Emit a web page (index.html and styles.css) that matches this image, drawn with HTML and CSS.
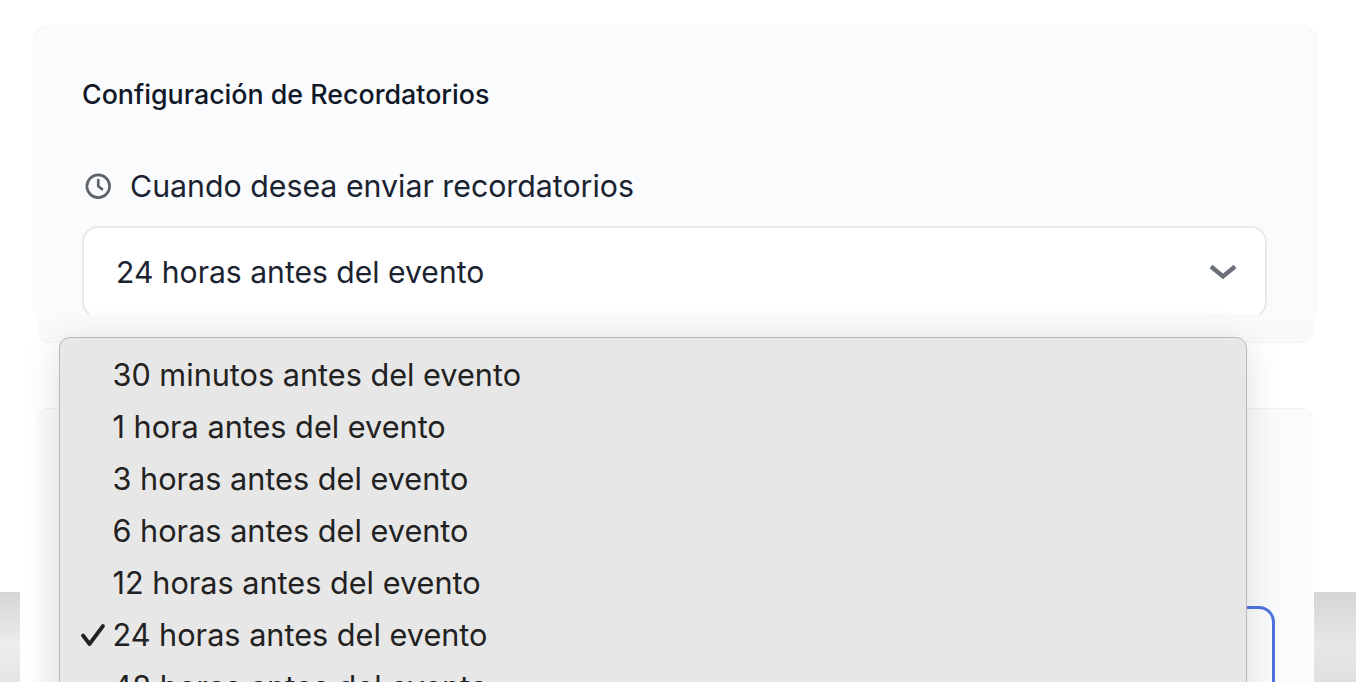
FILE: index.html
```html
<!DOCTYPE html>
<html lang="es">
<head>
<meta charset="utf-8">
<title>Configuración de Recordatorios</title>
<link rel="stylesheet" href="styles.css">
</head>
<body>
<main class="page">
  <section class="card card-top">
    <h2 class="title">Configuración de Recordatorios</h2>
    <div class="label-row">
      <svg class="clock" viewBox="0 0 28 28" fill="none" stroke="#5f6368" stroke-width="2.800" stroke-linecap="round" stroke-linejoin="round"><circle cx="14" cy="14" r="12"/><path d="M14 7.500V14l4 3"/></svg>
      <span class="label">Cuando desea enviar recordatorios</span>
    </div>
    <div class="select">
      <span>24 horas antes del evento</span>
      <svg class="chevron" viewBox="0 0 28 16" width="28" height="16" fill="none" stroke="#6b7078" stroke-width="4.400"><path d="M2 2.500l12 10 12-10"/></svg>
    </div>
  </section>
  <div class="card-foot"></div>
  <section class="card card-bottom">
    <div class="field"></div>
  </section>
</main>
<div class="menu">
  <div class="option">30 minutos antes del evento</div>
  <div class="option">1 hora antes del evento</div>
  <div class="option">3 horas antes del evento</div>
  <div class="option">6 horas antes del evento</div>
  <div class="option">12 horas antes del evento</div>
  <div class="option selected">
    <svg class="check" viewBox="0 0 26 24" width="26" height="24" fill="none" stroke="#222" stroke-width="3.800" stroke-linecap="round" stroke-linejoin="round"><path d="M3 12.500l6.500 8.500L23 3"/></svg>
    24 horas antes del evento
  </div>
  <div class="option">48 horas antes del evento</div>
</div>
</body>
</html>
```

FILE: styles.css
```css
* { box-sizing: border-box; }
html, body { margin: 0; height: 682px; overflow: hidden; }
body {
  background-color: #fff;
  background-image:
    linear-gradient(#d3d5d7, #eceded 60%, #e3e4e5),
    linear-gradient(#d3d5d7, #e6e7e8 60%, #dfe0e1);
  background-repeat: no-repeat;
  background-size: 20px 90px, 42px 90px;
  background-position: left bottom, right bottom;
  font-family: Inter, "Liberation Sans", sans-serif;
  position: relative;
}
.page { display: flex; flex-direction: column; padding: 25px 39px 0 33px; }
.card { background: #f9fbfd; }
.card-top {
  height: 289px;
  padding: 53px 49px 0 48px;
  border: 1px solid #f3f5f7;
  border-bottom: 0;
  border-radius: 16px 16px 0 0;
  overflow: hidden;
}
.card-foot {
  height: 29px;
  margin: 0 4px;
  background: #f8fafc;
  border-bottom: 1px solid #f1f3f5;
  border-radius: 0 0 12px 12px;
}
.card-bottom {
  height: 274px;
  margin: 65px 4px 0;
  padding: 197px 38px 0 100px;
  border-top: 1px solid #f1f3f5;
  border-radius: 12px 12px 0 0;
}
.title { margin: 0; font-size: 26.800px; line-height: 30px; font-weight: 500; color: #111827; }
.label-row { display: flex; align-items: center; gap: 18.500px; margin-top: 58px; height: 38px; margin-bottom: 21px; }
.clock { flex: none; width: 26.500px; height: 26.500px; margin-left: 3px; }
.label { font-size: 30.300px; line-height: 38px; color: #1b2330; }
.select {
  display: flex; align-items: center; justify-content: space-between;
  height: 92px; padding: 0 28px 0 32px;
  background: #fff; border: 2px solid #e6e8eb; border-radius: 16px;
  font-size: 30.100px; color: #1b2330;
}
.field { height: 120px; border: 3.500px solid #4f74e0; border-radius: 16px; }
.menu {
  position: absolute; left: 59px; top: 337px; width: 1188px; height: 400px;
  padding-top: 11px;
  background: #e7e7e7; border: 1px solid #b9b9b9; border-radius: 11px;
  box-shadow: 0 6px 36px rgba(0,0,0,.13);
  font-size: 30.650px; color: #222;
}
.option { position: relative; height: 52px; line-height: 52px; padding-left: 52.500px; white-space: nowrap; }
.check { position: absolute; left: 20px; top: 14px; }
```
